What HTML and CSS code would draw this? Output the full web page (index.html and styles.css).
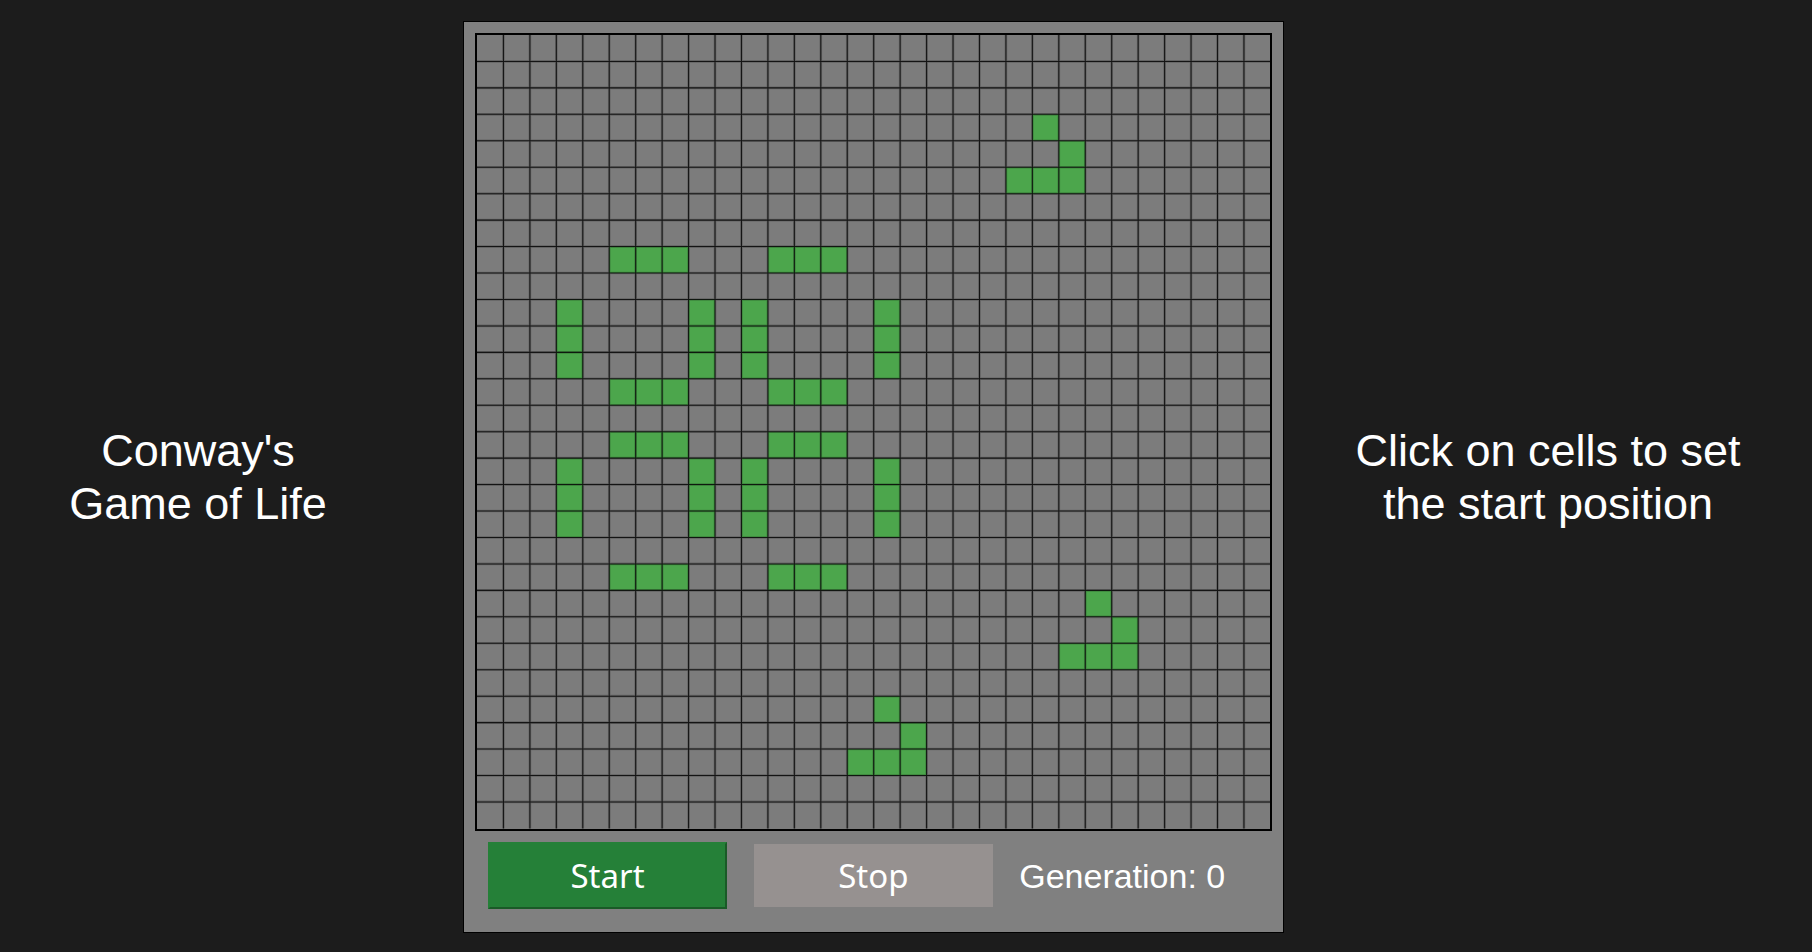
FILE: index.html
```html
<!DOCTYPE html>
<html lang="en">
<head>
<meta charset="utf-8">
<title>Conway's Game of Life</title>
<link rel="stylesheet" href="styles.css">
</head>
<body>
<main class="layout">
  <h1 class="caption">Conway's<br>Game of Life</h1>
  <section class="panel">
    <svg class="board" id="board" viewBox="0 0 600 600" role="img" aria-label="Cell grid">
      <g class="cells" id="cells"></g>
      <path class="grid-halo" id="halo"></path>
      <path class="grid-line" id="lines"></path>
    </svg>
    <div class="controls">
      <button class="btn btn-start" id="start" type="button">Start</button>
      <button class="btn btn-stop" id="stop" type="button">Stop</button>
      <output class="generation">Generation: <span id="count">0</span></output>
    </div>
  </section>
  <p class="caption">Click on cells to set<br>the start position</p>
</main>
<script src="script.js"></script>
</body>
</html>
```
FILE: styles.css
```css
* {
  box-sizing: border-box;
}

body {
  margin: 0;
  background: #1c1c1c;
  color: #fff;
  font-family: "Liberation Sans", Arial, sans-serif;
}

.layout {
  display: grid;
  grid-template-columns: 33fr 74fr 44fr;
  align-items: center;
  min-height: 100vh;
  padding-top: 2px;
}

.caption {
  margin: 0;
  font-size: 45px;
  font-weight: 400;
  line-height: 53px;
  text-align: center;
}

.panel {
  justify-self: end;
  width: 92.5%;
  padding: 11px;
  border: 1px solid #000;
  background: #808080;
}

.board {
  display: block;
  width: 100%;
  aspect-ratio: 1;
  border: 2px solid #000;
  background: #7c7c7c;
  cursor: pointer;
}

.cells {
  fill: #4ca64c;
}

.grid-line {
  fill: none;
  stroke: #000;
  stroke-width: 0.8;
  stroke-opacity: 0.8;
}

.grid-halo {
  fill: none;
  stroke: #000;
  stroke-width: 2;
  stroke-opacity: 0.2;
}

.controls {
  display: grid;
  grid-template-columns: repeat(3, 1fr);
  align-items: center;
  justify-items: center;
  min-height: 90px;
}

.btn {
  width: 90%;
  padding: 0;
  color: #fff;
  font-family: Tahoma, "Noto Sans", sans-serif;
  font-size: 33px;
  line-height: 63px;
}

.btn-start {
  border: 2px solid #258038;
  border-right-color: #1a5a27;
  border-bottom-color: #1a5a27;
  background: #258038;
}

.btn-stop {
  border: 0;
  background: #969190;
}

.generation {
  justify-self: start;
  padding-left: 13px;
  font-size: 34px;
  line-height: 40px;
}
```
FILE: script.js
```js
const SIZE = 30;
const CELL = 20;
const alive = new Set();

function add(row, ...cols) {
  cols.forEach((col) => alive.add(row * SIZE + col));
}

function glider(row, col) {
  add(row, col + 1);
  add(row + 1, col + 2);
  add(row + 2, col, col + 1, col + 2);
}

[8, 13, 15, 20].forEach((row) => add(row, 5, 6, 7, 11, 12, 13));
[10, 11, 12, 16, 17, 18].forEach((row) => add(row, 3, 8, 10, 15));
glider(3, 20);
glider(21, 22);
glider(25, 14);

const board = document.getElementById("board");
const cells = document.getElementById("cells");
const count = document.getElementById("count");
let generation = 0;
let timer = null;

let path = "";
for (let i = 1; i < SIZE; i++) {
  path += `M${i * CELL} 0V600M0 ${i * CELL}H600`;
}
document.getElementById("lines").setAttribute("d", path);
document.getElementById("halo").setAttribute("d", path);

function draw() {
  cells.innerHTML = [...alive].map((n) => {
    const x = (n % SIZE) * CELL;
    const y = Math.floor(n / SIZE) * CELL;
    return `<rect x="${x}" y="${y}" width="${CELL}" height="${CELL}"/>`;
  }).join("");
  count.textContent = generation;
}

function step() {
  const next = [];
  for (let n = 0; n < SIZE * SIZE; n++) {
    const row = Math.floor(n / SIZE);
    const col = n % SIZE;
    let near = 0;
    for (let r = row - 1; r <= row + 1; r++) {
      for (let c = col - 1; c <= col + 1; c++) {
        const inside = r >= 0 && c >= 0 && r < SIZE && c < SIZE;
        if (inside && (r !== row || c !== col) && alive.has(r * SIZE + c)) near++;
      }
    }
    if (near === 3 || (near === 2 && alive.has(n))) next.push(n);
  }
  alive.clear();
  next.forEach((n) => alive.add(n));
  generation++;
  draw();
}

board.addEventListener("click", (event) => {
  const box = board.getBoundingClientRect();
  const col = Math.floor(((event.clientX - box.left - 2) / (box.width - 4)) * SIZE);
  const row = Math.floor(((event.clientY - box.top - 2) / (box.height - 4)) * SIZE);
  if (col < 0 || row < 0 || col >= SIZE || row >= SIZE) return;
  const n = row * SIZE + col;
  if (!alive.delete(n)) alive.add(n);
  draw();
});

document.getElementById("start").addEventListener("click", () => {
  if (!timer) timer = setInterval(step, 200);
});

document.getElementById("stop").addEventListener("click", () => {
  clearInterval(timer);
  timer = null;
});

draw();
```
